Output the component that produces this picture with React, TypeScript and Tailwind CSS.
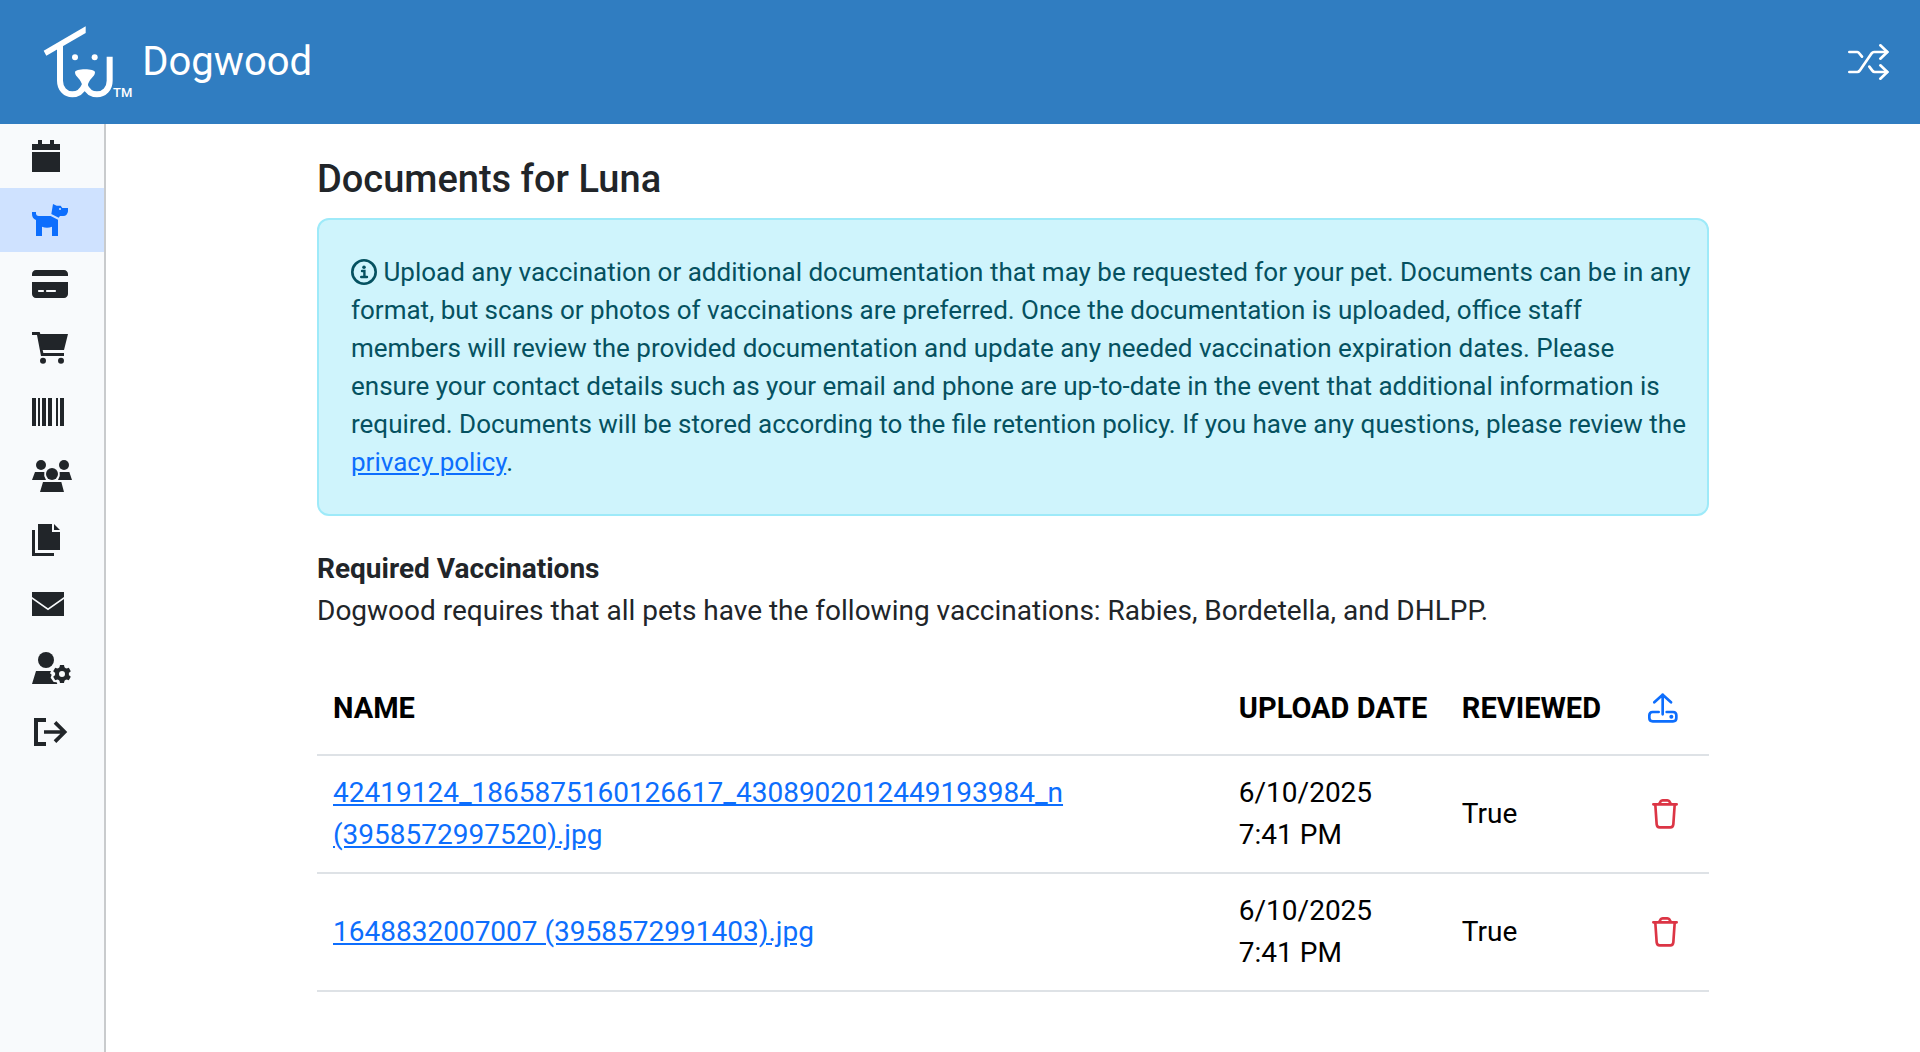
import React from 'react';
import { FaCreditCard } from 'react-icons/fa6';

const CalendarIcon = () => (
  <svg viewBox="0 0 84 96" className="w-7 h-8" fill="currentColor" aria-hidden="true">
    <path d="M18 0H30V12H54V0H66V12H84V30H0V12H18ZM0 36H84V96H0Z" />
  </svg>
);

const DogIcon = () => (
  <svg viewBox="0 0 108 96" className="w-9 h-8" fill="currentColor" aria-hidden="true">
    <path d="M0 24H12V30Q13 36 20 36H56L78 47V96H60V68Q45 74 30 68V96H12V48Q0 44 0 30Z" />
    <path
      fillRule="evenodd"
      d="M63 0L74 5H86L91 12H108V22Q106 36 94 36H84L80 41L58 30ZM84 12A3 3 0 1 0 84 18A3 3 0 1 0 84 12Z"
    />
  </svg>
);

const CartIcon = () => (
  <svg viewBox="0 0 108 96" className="w-9 h-8" fill="currentColor" aria-hidden="true">
    <path d="M0 0H23L25 6H108L96 54H32L34 63H96V72H27L15 9H0Z" />
    <circle cx="33" cy="86" r="9" />
    <circle cx="87" cy="86" r="9" />
  </svg>
);

const BarcodeIcon = () => (
  <svg viewBox="0 0 96 84" className="w-8 h-7" fill="currentColor" aria-hidden="true">
    <path d="M0 0H12V84H0ZM18 0H24V84H18ZM30 0H42V84H30ZM48 0H60V84H48ZM72 0H78V84H72ZM84 0H96V84H84Z" />
  </svg>
);

const UsersIcon = () => (
  <svg viewBox="0 0 120 96" className="w-10 h-8" fill="currentColor" aria-hidden="true">
    <circle cx="27" cy="15" r="15" />
    <circle cx="96" cy="15" r="15" />
    <circle cx="60" cy="42" r="18" />
    <path d="M9 36H37Q34 48 42 60H0ZM83 36H112L120 60H78Q86 48 83 36ZM33 66H88L96 96H24Z" />
  </svg>
);

const CopyIcon = () => (
  <svg viewBox="0 0 84 96" className="w-7 h-8" fill="currentColor" aria-hidden="true">
    <path d="M18 0H60V24H84V78H18ZM66 0L84 18H66ZM0 18H9V87H66V96H0Z" />
  </svg>
);

const EnvelopeIcon = () => (
  <svg viewBox="0 0 96 72" className="w-8 h-6" fill="currentColor" aria-hidden="true">
    <path d="M0 0H96V15L48 49L0 15ZM0 21L48 55L96 21V72H0Z" />
  </svg>
);

const UserGearIcon = () => (
  <svg viewBox="0 0 120 96" className="w-10 h-8" fill="currentColor" aria-hidden="true">
    <circle cx="42" cy="24" r="24" />
    <path d="M12 57H57L54 64L59 68L56 77L65 90L74 91L76 96H0Z" />
    <g transform="translate(90 66)">
      <circle r="15" fill="none" stroke="currentColor" strokeWidth="12" />
      <path d="M-6 -27H6L8 -18H-8ZM-6 27H6L8 18H-8Z" />
      <path d="M-6 -27H6L8 -18H-8ZM-6 27H6L8 18H-8Z" transform="rotate(60)" />
      <path d="M-6 -27H6L8 -18H-8ZM-6 27H6L8 18H-8Z" transform="rotate(120)" />
    </g>
  </svg>
);

const SignOutIcon = () => (
  <svg viewBox="-6 0 108 84" className="w-9 h-7" fill="none" stroke="currentColor" aria-hidden="true">
    <path d="M36 6H6V78H36" strokeWidth="12" />
    <path d="M30 42H94M63 13L92 42L63 71" strokeWidth="11" />
  </svg>
);

const ShuffleIcon = () => (
  <svg
    viewBox="0 0 123 108"
    className="w-[41px] h-9"
    fill="none"
    stroke="currentColor"
    strokeWidth="8"
    strokeLinecap="round"
    strokeLinejoin="round"
    aria-hidden="true"
  >
    <path d="M4 24H28Q31 24 33 27L42 38M4 84H28Q32 84 35 80L71 28Q74 24 78 24H118M64 68L73 80Q76 84 80 84H118" />
    <path d="M97 4L118 24L97 44M97 64L118 84L97 104" />
  </svg>
);

const InfoIcon = () => (
  <svg viewBox="0 0 26 26" className="inline-block w-[26px] h-[26px] align-[-4px]" aria-hidden="true">
    <circle cx="13" cy="13" r="11.7" fill="none" stroke="currentColor" strokeWidth="2.6" />
    <circle cx="13" cy="8.3" r="1.8" fill="currentColor" />
    <path d="M11 12H13.4V17.7M10.2 18H16" fill="none" stroke="currentColor" strokeWidth="2.4" strokeLinecap="round" />
  </svg>
);

const UploadIcon = () => (
  <svg
    viewBox="0 0 90 90"
    className="w-[30px] h-[30px]"
    fill="none"
    stroke="currentColor"
    strokeWidth="8"
    strokeLinecap="round"
    strokeLinejoin="round"
    aria-hidden="true"
  >
    <path d="M44 64V5M19 28L44 5L69 28" />
    <path d="M32 57H14Q4 57 4 67V75Q4 85 14 85H75Q85 85 85 75V67Q85 57 75 57H56" />
    <circle cx="70" cy="71" r="6" fill="currentColor" stroke="none" />
  </svg>
);

const TrashIcon = () => (
  <svg
    viewBox="0 0 78 90"
    className="w-[26px] h-[30px]"
    fill="none"
    stroke="currentColor"
    strokeWidth="8"
    strokeLinecap="round"
    strokeLinejoin="round"
    aria-hidden="true"
  >
    <path d="M4 16H74M22 14L26 7Q28 4 32 4H46Q50 4 52 7L56 14" />
    <path d="M10 18L14 76Q15 85 23 85H55Q63 85 64 76L68 18" />
  </svg>
);

const Logo = () => (
  <svg viewBox="0 0 210 219" className="w-[70px] h-[73px]" fill="#fff" aria-hidden="true">
    <path d="M2 74L128 1V21L10 89Z" />
    <path
      d="M51 56V164C51 188 67 205 88 205C106 205 118 194 125 178C132 194 144 205 162 205C184 205 200 188 200 164V92"
      fill="none"
      stroke="#fff"
      strokeWidth="18"
    />
    <path d="M96 139C96 133 110 130 126 130S156 133 156 139C156 154 136 158 134 182H118C116 158 96 154 96 139Z" />
    <circle cx="96" cy="94" r="9" />
    <circle cx="155" cy="94" r="9" />
  </svg>
);

const navItems = [
  { label: 'Calendar', icon: <CalendarIcon /> },
  { label: 'Pets', icon: <DogIcon />, active: true },
  { label: 'Payment methods', icon: <FaCreditCard className="w-9 h-8" aria-hidden="true" /> },
  { label: 'Shop', icon: <CartIcon /> },
  { label: 'Packages', icon: <BarcodeIcon /> },
  { label: 'Contacts', icon: <UsersIcon /> },
  { label: 'Documents', icon: <CopyIcon /> },
  { label: 'Messages', icon: <EnvelopeIcon /> },
  { label: 'Account settings', icon: <UserGearIcon /> },
  { label: 'Sign out', icon: <SignOutIcon /> },
];

const documents = [
  {
    name: '42419124_1865875160126617_4308902012449193984_n (3958572997520).jpg',
    date: '6/10/2025',
    time: '7:41 PM',
    reviewed: true,
  },
  {
    name: '1648832007007 (3958572991403).jpg',
    date: '6/10/2025',
    time: '7:41 PM',
    reviewed: true,
  },
];

const App: React.FC = () => {
  return (
    <div className="min-h-screen flex flex-col bg-white text-[#212529] text-[28px] leading-[42px] font-[Roboto,sans-serif]">
      <header className="h-[124px] shrink-0 flex items-center justify-between bg-[#307dc1] text-white pl-[43px] pr-[31px]">
        <a href="#" className="flex items-center">
          <Logo />
          <span className="self-end text-[13px] leading-3 font-medium">TM</span>
          <span className="ml-2.5 text-[40px] leading-[48px]">Dogwood</span>
        </a>
        <button type="button" aria-label="Switch location" className="cursor-pointer">
          <ShuffleIcon />
        </button>
      </header>

      <div className="flex flex-1">
        <nav className="w-[106px] shrink-0 bg-[#f8fafc] border-r-2 border-[#c9cbcd]">
          {navItems.map((item) => (
            <a
              key={item.label}
              href="#"
              aria-label={item.label}
              className={`flex items-center h-16 pl-8 ${item.active ? 'bg-[#cfe2ff] text-[#0d6efd]' : ''}`}
            >
              {item.icon}
            </a>
          ))}
        </nav>

        <main className="flex-1 min-w-0 pt-8 px-4">
          <div className="max-w-[1392px] mx-auto">
            <h1 className="text-[38px] leading-[46px] font-medium mb-4">Documents for Luna</h1>

            <div className="rounded-xl border-2 border-[#9eeaf9] bg-[#cff4fc] text-[#055160] text-[26px] leading-[38px] pl-8 pr-4 py-[33px] mb-8">
              <InfoIcon /> Upload any vaccination or additional documentation that may be requested for your pet.
              Documents can be in any format, but scans or photos of vaccinations are preferred. Once the
              documentation is uploaded, office staff members will review the provided documentation and update any
              needed vaccination expiration dates. Please ensure your contact details such as your email and phone are
              up-to-date in the event that additional information is required. Documents will be stored according to
              the file retention policy. If you have any questions, please review the{' '}
              <a href="#" className="text-[#0d6efd] underline">privacy policy</a>.
            </div>

            <h2 className="font-bold">Required Vaccinations</h2>
            <p className="mb-[30px]">
              Dogwood requires that all pets have the following vaccinations: Rabies, Bordetella, and DHLPP.
            </p>

            <table className="w-full text-black text-left">
              <thead>
                <tr className="h-[93px] border-b-2 border-[#dee2e6] text-[29px]">
                  <th className="px-4 font-bold">NAME</th>
                  <th className="w-[223px] px-4 font-bold whitespace-nowrap">UPLOAD DATE</th>
                  <th className="w-[170px] px-4 font-bold">REVIEWED</th>
                  <th className="w-[92px] pr-[31px]">
                    <button type="button" aria-label="Upload document" className="flex ml-auto text-[#0d6efd] cursor-pointer">
                      <UploadIcon />
                    </button>
                  </th>
                </tr>
              </thead>
              <tbody>
                {documents.map((doc) => (
                  <tr key={doc.name} className="border-b-2 border-[#dee2e6]">
                    <td className="px-4 py-4">
                      <a href="#" className="text-[#0d6efd] underline">{doc.name}</a>
                    </td>
                    <td className="px-4 py-4">
                      {doc.date}
                      <br />
                      {doc.time}
                    </td>
                    <td className="px-4 py-4">{doc.reviewed ? 'True' : 'False'}</td>
                    <td className="pr-[31px]">
                      <button type="button" aria-label="Delete document" className="flex ml-auto text-[#dc3545] cursor-pointer">
                        <TrashIcon />
                      </button>
                    </td>
                  </tr>
                ))}
              </tbody>
            </table>
          </div>
        </main>
      </div>
    </div>
  );
};

export default App;
